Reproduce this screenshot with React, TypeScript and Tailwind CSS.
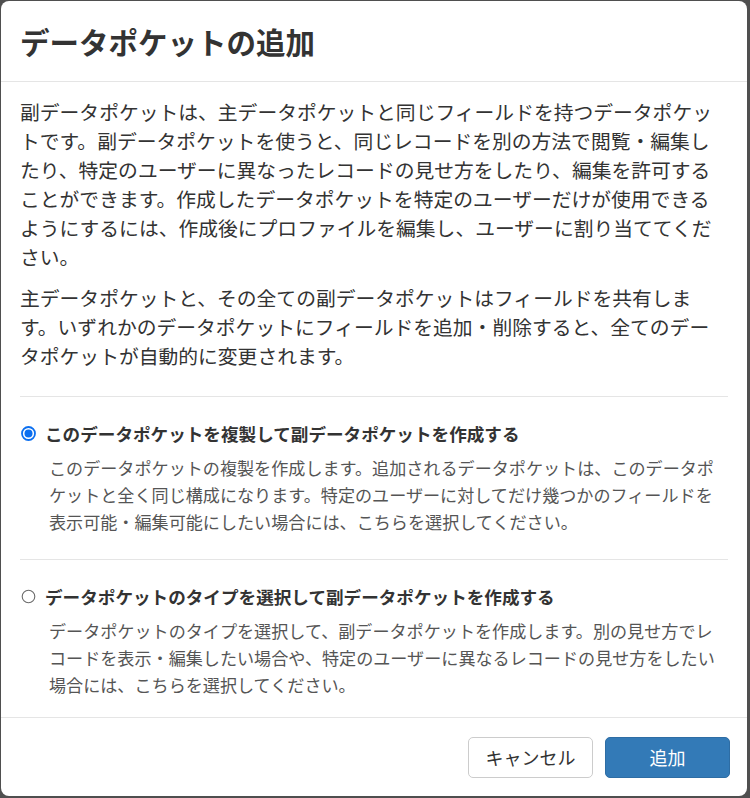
import React from "react";

const FONT = { fontFamily: '"Noto Sans CJK JP", "Noto Sans", sans-serif' };

const options = [
  {
    id: "copy",
    checked: true,
    label: "このデータポケットを複製して副データポケットを作成する",
    description:
      "このデータポケットの複製を作成します。追加されるデータポケットは、このデータポケットと全く同じ構成になります。特定のユーザーに対してだけ幾つかのフィールドを表示可能・編集可能にしたい場合には、こちらを選択してください。",
  },
  {
    id: "type",
    checked: false,
    label: "データポケットのタイプを選択して副データポケットを作成する",
    description:
      "データポケットのタイプを選択して、副データポケットを作成します。別の見せ方でレコードを表示・編集したい場合や、特定のユーザーに異なるレコードの見せ方をしたい場合には、こちらを選択してください。",
  },
];

const Radio = ({ checked }: { checked: boolean }) => (
  <svg width="15" height="15" viewBox="0 0 15 15" className="shrink-0">
    {checked ? (
      <>
        <circle cx="7.5" cy="7.5" r="6.5" fill="white" stroke="#0b6ff0" strokeWidth="1.8" />
        <circle cx="7.5" cy="7.5" r="4" fill="#0b6ff0" />
      </>
    ) : (
      <circle cx="7.5" cy="7.5" r="6.3" fill="white" stroke="#6b6b6b" strokeWidth="1.1" />
    )}
  </svg>
);

export default function App() {
  return (
    <div
      className="w-[750px] h-[798px] bg-[#4f4f4f] pl-[1px] pt-[1px] pr-[3px] pb-[2px]"
      style={FONT}
    >
      <div className="flex h-full flex-col overflow-hidden rounded-[8px] bg-white text-[#333]">
        <div className="flex h-[81px] shrink-0 items-center border-b border-[#e5e5e5] pl-[19px] pr-[17px] pt-[2px]">
          <h1 className="text-[29.5px] font-bold leading-none text-[#333]">
            データポケットの追加
          </h1>
        </div>

        <div className="flex-1 px-[19px] pt-[15px]">
          <p className="text-[19.8px] leading-[29px] text-[#333]">
            副データポケットは、主データポケットと同じフィールドを持つデータポケットです。副データポケットを使うと、同じレコードを別の方法で閲覧・編集したり、特定のユーザーに異なったレコードの見せ方をしたり、編集を許可することができます。作成したデータポケットを特定のユーザーだけが使用できるようにするには、作成後にプロファイルを編集し、ユーザーに割り当ててください。
          </p>
          <p className="mt-[12px] text-[19.8px] leading-[29px] text-[#333]">
            主データポケットと、その全ての副データポケットはフィールドを共有します。いずれかのデータポケットにフィールドを追加・削除すると、全てのデータポケットが自動的に変更されます。
          </p>

          <div className="mt-[26px]">
            {options.map((opt) => (
              <div
                key={opt.id}
                className="border-t border-[#e5e5e5] pt-[23px] pb-[24px] last:pb-[12px]"
              >
                <label className="flex h-[27px] items-center gap-[9px] pl-[1px]">
                  <Radio checked={opt.checked} />
                  <span className="text-[17.6px] font-bold leading-[27px] text-[#333]">
                    {opt.label}
                  </span>
                </label>
                <p className="mt-[7px] pl-[29px] text-[17.1px] leading-[27px] text-[#555]">
                  {opt.description}
                </p>
              </div>
            ))}
          </div>
        </div>

        <div className="flex shrink-0 justify-end gap-[12px] border-t border-[#e5e5e5] pl-[19px] pr-[17px] pt-[19px] pb-[18px]">
          <button className="h-[41px] w-[125px] rounded-[5px] border border-[#cccccc] bg-white text-[18px] text-[#333]">
            キャンセル
          </button>
          <button className="h-[41px] w-[125px] rounded-[5px] border border-[#2e6da4] bg-[#337ab7] text-[18px] text-white">
            追加
          </button>
        </div>
      </div>
    </div>
  );
}
